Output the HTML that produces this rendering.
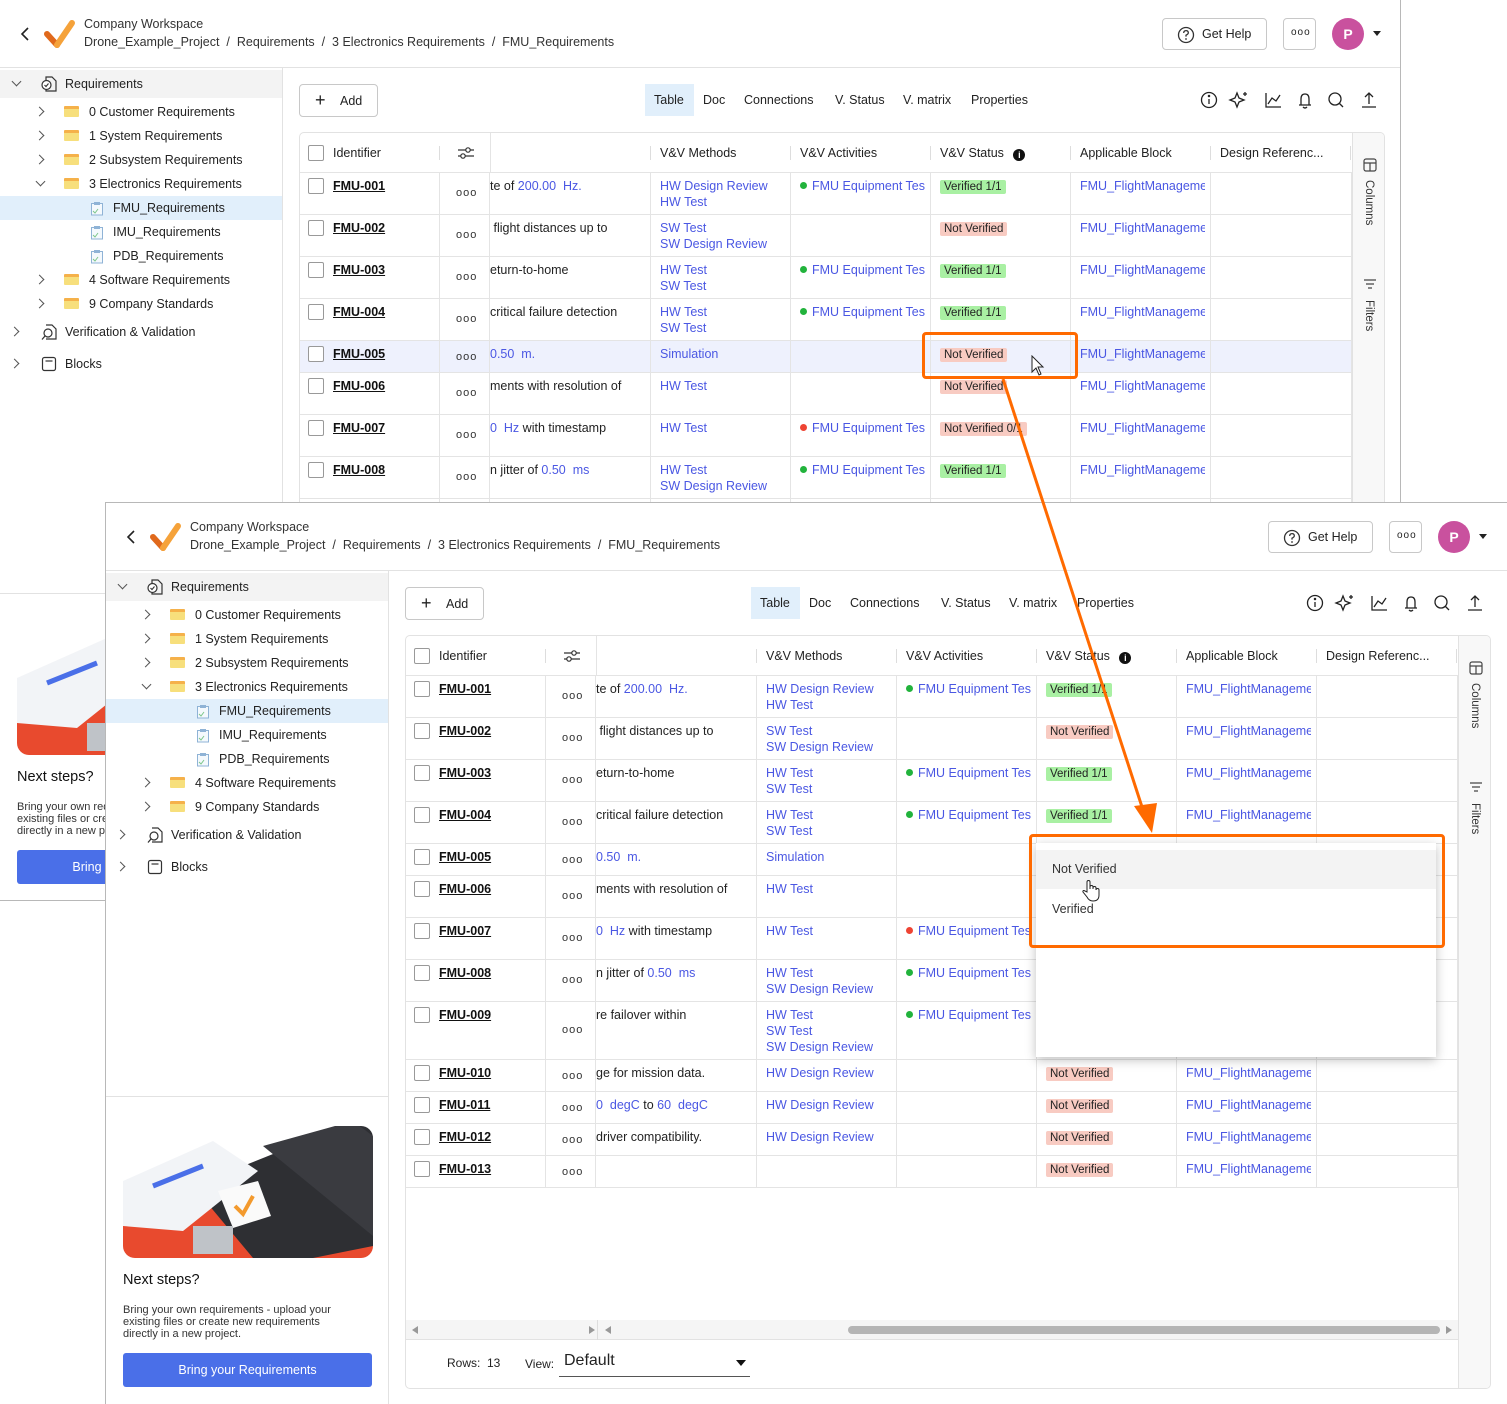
<!DOCTYPE html>
<html><head><meta charset="utf-8"><style>
*{box-sizing:border-box;margin:0;padding:0}
body{width:1507px;height:1404px;position:relative;overflow:hidden;background:#fff;font-family:"Liberation Sans",sans-serif;color:#222;font-size:12.5px}
.win{position:absolute;width:1402px;height:902px;background:#fff;border:1px solid #b8b8b8;overflow:hidden}
#w1{left:-1px;top:-1px;height:902px}
#w2{left:105px;top:502px;border-right:none;border-bottom:none}
.a{position:absolute;white-space:nowrap}
.hdr{position:absolute;left:0;top:0;width:1402px;height:68px;border-bottom:1px solid #e2e2e2}
.btn{position:absolute;border:1px solid #c8c8c8;border-radius:4px;background:#fff}
.side{position:absolute;left:0;top:68px;width:283px;height:840px;border-right:1px solid #e2e2e2}
.tr{position:absolute;left:0;width:282px;height:24px;line-height:24px;font-size:12.5px}
.fold{position:absolute;width:15px;height:11px;background:#f7df7c;border-top:3px solid #f5b14a;border-radius:1px}
.chev{position:absolute;width:7px;height:7px;border-right:1.5px solid #555;border-bottom:1.5px solid #555}
.cr{transform:rotate(-45deg)}.cd{transform:rotate(45deg)}
.tabl{position:absolute;left:299px;top:132px;width:1086px;height:754px;border:1px solid #e2e2e2;border-radius:5px;overflow:hidden}
.row{position:absolute;left:0;width:1052px;display:flex;border-bottom:1px solid #e4e4e4}
.row>div{position:relative;border-right:1px solid #e4e4e4;padding:5px 0 0 9px;line-height:16px;overflow:hidden;white-space:nowrap}
.t{overflow:hidden;width:125px;white-space:nowrap}
.c1{width:140px}.c2{width:50px}.c3{width:161px;padding-left:0!important}.c4,.c5,.c6,.c7{width:140px}.c8{width:141px}
.cb{position:absolute;left:8px;top:5px;width:16px;height:16px;border:1px solid #999;border-radius:2px;background:#fff}
.id{position:absolute;left:33px;top:5px;font-weight:bold;text-decoration:underline;color:#111}
.dots{position:absolute;left:16px;font-size:11px;letter-spacing:1px;color:#333}
.l{color:#4a57e3}
.vb{background:#a9f0a3;padding:0 4px;font-size:11.5px;border-radius:2px;display:inline-block;line-height:14px;margin-top:1px}
.nb{background:#f8cbc2;padding:0 4px;font-size:11.5px;border-radius:2px;display:inline-block;line-height:14px;margin-top:1px}
.gd,.rd{display:inline-block;width:7px;height:7px;border-radius:50%;background:#22b33c;margin-right:5px;vertical-align:1px}
.rd{background:#ee4433}
.hrow{position:absolute;left:0;top:0;width:1052px;height:40px;border-bottom:1px solid #e4e4e4;font-size:12.5px}
.hs{position:absolute;top:13px;width:1px;height:14px;background:#ddd}
.panel{position:absolute;left:1052px;top:0;width:34px;height:754px;background:#f8f8f8;border-left:1px solid #e2e2e2}
.vt{position:absolute;transform:rotate(90deg);transform-origin:0 0;font-size:11.5px;color:#333}
.ico{position:absolute}
</style></head><body>

<div class="win" id="w1">
<div id="tpl">
 <div class="hdr">
  <svg class="ico" style="left:18px;top:26px" width="14" height="16"><path d="M10 2 L4 8 L10 14" stroke="#222" stroke-width="1.6" fill="none"/></svg>
  <svg class="ico" style="left:43px;top:18px" width="34" height="32"><path d="M4 16 L14 27" stroke="#e0691c" stroke-width="6" stroke-linecap="round"/><path d="M14 27 L29 5" stroke="#f5a23a" stroke-width="6" stroke-linecap="round"/></svg>
  <div class="a" style="left:84px;top:17px;font-size:12.5px;color:#333">Company Workspace</div>
  <div class="a" style="left:84px;top:35px;font-size:12.5px;color:#333">Drone_Example_Project &nbsp;/&nbsp; Requirements &nbsp;/&nbsp; 3 Electronics Requirements &nbsp;/&nbsp; FMU_Requirements</div>
  <div class="btn" style="left:1162px;top:18px;width:105px;height:32px"><svg class="ico" style="left:14px;top:7px" width="18" height="18"><circle cx="9" cy="9" r="7.5" stroke="#333" stroke-width="1.3" fill="none"/><path d="M6.7 7 Q6.7 4.6 9 4.6 Q11.3 4.6 11.3 6.8 Q11.3 8.2 9 9.2 L9 10.6" stroke="#333" stroke-width="1.3" fill="none"/><circle cx="9" cy="13" r=".9" fill="#333"/></svg><span class="a" style="left:39px;top:8px;font-size:12.5px">Get Help</span></div>
  <div class="btn" style="left:1283px;top:18px;width:33px;height:32px"><span class="a" style="left:7px;top:8px;font-size:10px;letter-spacing:1px">ooo</span></div>
  <div class="a" style="left:1332px;top:18px;width:32px;height:32px;border-radius:50%;background:#c9519e;color:#fff;font-weight:bold;font-size:14px;text-align:center;line-height:32px">P</div>
  <div class="a" style="left:1373px;top:31px;width:0;height:0;border-left:4px solid transparent;border-right:4px solid transparent;border-top:5px solid #222"></div>
 </div>
 <div class="side">
  <div class="tr" style="top:2px;height:28px;background:#f3f3f3;line-height:28px"><i class="chev cd" style="left:13px;top:8px"></i>
   <svg class="ico" style="left:40px;top:5px" width="18" height="18"><path d="M6 2 H12 L16 6 V16 H6 Z" stroke="#333" fill="none" stroke-width="1.2"/><circle cx="6.5" cy="10" r="4.5" stroke="#333" fill="#fff" stroke-width="1.2"/><path d="M4.5 10 L6 11.5 L8.5 8.5" stroke="#333" fill="none" stroke-width="1.1"/></svg>
   <span class="a" style="left:65px">Requirements</span></div>
  <div class="tr" style="top:32px"><i class="chev cr" style="left:36px;top:8px"></i><i class="fold" style="left:64px;top:6px"></i><span class="a" style="left:89px">0 Customer Requirements</span></div>
  <div class="tr" style="top:56px"><i class="chev cr" style="left:36px;top:8px"></i><i class="fold" style="left:64px;top:6px"></i><span class="a" style="left:89px">1 System Requirements</span></div>
  <div class="tr" style="top:80px"><i class="chev cr" style="left:36px;top:8px"></i><i class="fold" style="left:64px;top:6px"></i><span class="a" style="left:89px">2 Subsystem Requirements</span></div>
  <div class="tr" style="top:104px"><i class="chev cd" style="left:37px;top:6px"></i><i class="fold" style="left:64px;top:6px"></i><span class="a" style="left:89px">3 Electronics Requirements</span></div>
  <div class="tr" style="top:128px;background:#e1effb"><svg class="ico" style="left:90px;top:5px" width="14" height="15"><rect x="1.5" y="2.5" width="11" height="11.5" stroke="#8fb3d6" fill="#f4f9fd"/><rect x="4" y="1" width="6" height="3" fill="#8fb3d6"/><path d="M3 10 L5 12 L8 8" stroke="#7cc68a" fill="none"/></svg><span class="a" style="left:113px">FMU_Requirements</span></div>
  <div class="tr" style="top:152px"><svg class="ico" style="left:90px;top:5px" width="14" height="15"><rect x="1.5" y="2.5" width="11" height="11.5" stroke="#8fb3d6" fill="#f4f9fd"/><rect x="4" y="1" width="6" height="3" fill="#8fb3d6"/><path d="M3 10 L5 12 L8 8" stroke="#7cc68a" fill="none"/></svg><span class="a" style="left:113px">IMU_Requirements</span></div>
  <div class="tr" style="top:176px"><svg class="ico" style="left:90px;top:5px" width="14" height="15"><rect x="1.5" y="2.5" width="11" height="11.5" stroke="#8fb3d6" fill="#f4f9fd"/><rect x="4" y="1" width="6" height="3" fill="#8fb3d6"/><path d="M3 10 L5 12 L8 8" stroke="#7cc68a" fill="none"/></svg><span class="a" style="left:113px">PDB_Requirements</span></div>
  <div class="tr" style="top:200px"><i class="chev cr" style="left:36px;top:8px"></i><i class="fold" style="left:64px;top:6px"></i><span class="a" style="left:89px">4 Software Requirements</span></div>
  <div class="tr" style="top:224px"><i class="chev cr" style="left:36px;top:8px"></i><i class="fold" style="left:64px;top:6px"></i><span class="a" style="left:89px">9 Company Standards</span></div>
  <div class="tr" style="top:252px"><i class="chev cr" style="left:11px;top:8px"></i><svg class="ico" style="left:40px;top:3px" width="18" height="18"><path d="M6 2 H12 L16 6 V16 H6" stroke="#333" fill="none" stroke-width="1.2"/><circle cx="8" cy="10" r="4" stroke="#333" fill="#fff" stroke-width="1.2"/><path d="M5 13 L2 16.5" stroke="#333" stroke-width="1.3"/></svg><span class="a" style="left:65px">Verification &amp; Validation</span></div>
  <div class="tr" style="top:284px"><i class="chev cr" style="left:11px;top:8px"></i><svg class="ico" style="left:41px;top:4px" width="16" height="16"><rect x="1.5" y="1.5" width="13" height="13" rx="2" stroke="#333" fill="none" stroke-width="1.2"/><path d="M4.5 5 H11.5" stroke="#333" stroke-width="1.2"/></svg><span class="a" style="left:65px">Blocks</span></div>
  <div class="a" style="left:0;top:525px;width:283px;height:1px;background:#e2e2e2"></div>
  <svg class="ico" style="left:17px;top:555px" width="250" height="132" viewBox="0 0 250 132">
   <defs><clipPath id="cp"><rect x="0" y="0" width="250" height="132" rx="12"/></clipPath></defs>
   <g clip-path="url(#cp)">
   <path d="M0 95 L150 40 L250 100 L250 132 L0 132 Z" fill="#e84a2e"/>
   <path d="M70 60 L220 0 L250 0 L250 120 L190 132 L130 132 Z" fill="#2e2f33"/>
   <path d="M140 20 L230 -5 L250 10 L250 110 Z" fill="#3a3b40"/>
   <path d="M0 55 L90 15 L135 45 L60 105 L0 100 Z" fill="#f2f4f7"/>
   <path d="M30 60 L80 40" stroke="#4a6fe8" stroke-width="5"/>
   <path d="M95 65 L135 55 L148 90 L110 102 Z" fill="#fafafa"/>
   <path d="M112 80 L120 88 L130 70" stroke="#f39a2e" stroke-width="4" fill="none"/>
   <rect x="70" y="100" width="40" height="28" fill="#bfc3c8"/>
   </g>
  </svg>
  <div class="a" style="left:17px;top:701px;font-size:14.5px;color:#111">Next steps?</div>
  <div class="a" style="left:17px;top:733px;font-size:11px;line-height:12px;color:#333;white-space:normal;width:232px">Bring your own requirements - upload your existing files or create new requirements directly in a new project.</div>
  <div class="a" style="left:17px;top:782px;width:249px;height:34px;background:#4a6fe8;border-radius:3px;color:#fff;text-align:center;line-height:34px;font-size:12.5px">Bring your Requirements</div>
 </div>
 <div class="btn" style="left:299px;top:84px;width:79px;height:33px"><span class="a" style="left:15px;top:6px;font-size:18px;font-weight:300;line-height:18px">+</span><span class="a" style="left:40px;top:9px">Add</span></div>
 <div class="a" style="left:645px;top:84px;width:49px;height:32px;background:#e1effb"></div>
 <div class="a" style="left:654px;top:93px">Table</div>
 <div class="a" style="left:703px;top:93px">Doc</div>
 <div class="a" style="left:744px;top:93px">Connections</div>
 <div class="a" style="left:835px;top:93px">V. Status</div>
 <div class="a" style="left:903px;top:93px">V. matrix</div>
 <div class="a" style="left:971px;top:93px">Properties</div>
 <svg class="ico" style="left:1199px;top:90px" width="180" height="20" fill="none" stroke="#222" stroke-width="1.3">
  <circle cx="10" cy="10" r="7.5"/><path d="M10 9 V14"/><circle cx="10" cy="6" r=".6" fill="#222"/>
  <path d="M38 3 L40 8 L45 10 L40 12 L38 17 L36 12 L31 10 L36 8 Z"/><path d="M46 2 V6 M44 4 H48"/>
  <path d="M67 3 V17 H82 M69 14 L73 8 L77 11 L81 5"/>
  <path d="M100 15 H112 M102 15 V9 Q102 4 106 4 Q110 4 110 9 V15 M104 17 Q106 19 108 17"/>
  <circle cx="136" cy="9" r="6"/><path d="M140.5 13.5 L144 17"/>
  <path d="M163 17 H177 M170 3 V14 M166 7 L170 3 L174 7"/>
 </svg>
 <div class="tabl">
  <div class="hrow">
   <div class="cb" style="top:12px;left:8px"></div>
   <span class="a" style="left:33px;top:13px">Identifier</span>
   <div class="hs" style="left:139px"></div>
   <svg class="ico" style="left:157px;top:12px" width="18" height="16" stroke="#333" fill="none" stroke-width="1.2"><path d="M1 5 H17 M1 11 H17"/><circle cx="11" cy="5" r="2.2" fill="#fff"/><circle cx="6" cy="11" r="2.2" fill="#fff"/></svg>
   <div class="a" style="left:190px;top:0;width:1px;height:40px;background:#e4e4e4"></div>
   <div class="hs" style="left:350px"></div><span class="a" style="left:360px;top:13px">V&amp;V Methods</span>
   <div class="hs" style="left:490px"></div><span class="a" style="left:500px;top:13px">V&amp;V Activities</span>
   <div class="hs" style="left:630px"></div><span class="a" style="left:640px;top:13px">V&amp;V Status <span style="display:inline-block;width:12px;height:12px;border-radius:50%;background:#111;color:#fff;font-size:9px;text-align:center;line-height:12px;font-weight:bold;margin-left:6px;vertical-align:-1px">i</span></span>
   <div class="hs" style="left:770px"></div><span class="a" style="left:780px;top:13px">Applicable Block</span>
   <div class="hs" style="left:910px"></div><span class="a" style="left:920px;top:13px">Design Referenc...</span>
   <div class="hs" style="left:1050px"></div>
  </div>
  <div class="row" style="top:40px;height:42px"><div class="c1"><i class="cb"></i><span class="id">FMU-001</span></div><div class="c2"><span class="dots" style="top:12px">ooo</span></div><div class="c3">te of <span class="l">200.00 &nbsp;Hz.</span></div><div class="c4 l">HW Design Review<br>HW Test</div><div class="c5 l"><div class="t"><i class="gd"></i>FMU Equipment Test</div></div><div class="c6"><span class="vb">Verified 1/1</span></div><div class="c7 l"><div class="t">FMU_FlightManagement</div></div><div class="c8"></div></div>
  <div class="row" style="top:82px;height:42px"><div class="c1"><i class="cb"></i><span class="id">FMU-002</span></div><div class="c2"><span class="dots" style="top:12px">ooo</span></div><div class="c3">&nbsp;flight distances up to</div><div class="c4 l">SW Test<br>SW Design Review</div><div class="c5"></div><div class="c6"><span class="nb">Not Verified</span></div><div class="c7 l"><div class="t">FMU_FlightManagement</div></div><div class="c8"></div></div>
  <div class="row" style="top:124px;height:42px"><div class="c1"><i class="cb"></i><span class="id">FMU-003</span></div><div class="c2"><span class="dots" style="top:12px">ooo</span></div><div class="c3">eturn-to-home</div><div class="c4 l">HW Test<br>SW Test</div><div class="c5 l"><div class="t"><i class="gd"></i>FMU Equipment Test</div></div><div class="c6"><span class="vb">Verified 1/1</span></div><div class="c7 l"><div class="t">FMU_FlightManagement</div></div><div class="c8"></div></div>
  <div class="row" style="top:166px;height:42px"><div class="c1"><i class="cb"></i><span class="id">FMU-004</span></div><div class="c2"><span class="dots" style="top:12px">ooo</span></div><div class="c3">critical failure detection</div><div class="c4 l">HW Test<br>SW Test</div><div class="c5 l"><div class="t"><i class="gd"></i>FMU Equipment Test</div></div><div class="c6"><span class="vb">Verified 1/1</span></div><div class="c7 l"><div class="t">FMU_FlightManagement</div></div><div class="c8"></div></div>
  <div class="row r5" style="top:208px;height:32px"><div class="c1"><i class="cb"></i><span class="id">FMU-005</span></div><div class="c2"><span class="dots" style="top:8px">ooo</span></div><div class="c3 l">0.50 &nbsp;m.</div><div class="c4 l">Simulation</div><div class="c5"></div><div class="c6"><span class="nb s5">Not Verified</span></div><div class="c7 l"><div class="t">FMU_FlightManagement</div></div><div class="c8"></div></div>
  <div class="row" style="top:240px;height:42px"><div class="c1"><i class="cb"></i><span class="id">FMU-006</span></div><div class="c2"><span class="dots" style="top:12px">ooo</span></div><div class="c3">ments with resolution of</div><div class="c4 l">HW Test</div><div class="c5"></div><div class="c6"><span class="nb">Not Verified</span></div><div class="c7 l"><div class="t">FMU_FlightManagement</div></div><div class="c8"></div></div>
  <div class="row" style="top:282px;height:42px"><div class="c1"><i class="cb"></i><span class="id">FMU-007</span></div><div class="c2"><span class="dots" style="top:12px">ooo</span></div><div class="c3"><span class="l">0 &nbsp;Hz</span> with timestamp</div><div class="c4 l">HW Test</div><div class="c5 l"><div class="t"><i class="rd"></i>FMU Equipment Test</div></div><div class="c6"><span class="nb">Not Verified 0/1</span></div><div class="c7 l"><div class="t">FMU_FlightManagement</div></div><div class="c8"></div></div>
  <div class="row" style="top:324px;height:42px"><div class="c1"><i class="cb"></i><span class="id">FMU-008</span></div><div class="c2"><span class="dots" style="top:12px">ooo</span></div><div class="c3">n jitter of <span class="l">0.50 &nbsp;ms</span></div><div class="c4 l">HW Test<br>SW Design Review</div><div class="c5 l"><div class="t"><i class="gd"></i>FMU Equipment Test</div></div><div class="c6"><span class="vb">Verified 1/1</span></div><div class="c7 l"><div class="t">FMU_FlightManagement</div></div><div class="c8"></div></div>
  <div class="row" style="top:366px;height:58px"><div class="c1"><i class="cb"></i><span class="id">FMU-009</span></div><div class="c2"><span class="dots" style="top:20px">ooo</span></div><div class="c3">re failover within</div><div class="c4 l">HW Test<br>SW Test<br>SW Design Review</div><div class="c5 l"><div class="t"><i class="gd"></i>FMU Equipment Test</div></div><div class="c6"><span class="vb">Verified 1/1</span></div><div class="c7 l"><div class="t">FMU_FlightManagement</div></div><div class="c8"></div></div>
  <div class="row" style="top:424px;height:32px"><div class="c1"><i class="cb"></i><span class="id">FMU-010</span></div><div class="c2"><span class="dots" style="top:8px">ooo</span></div><div class="c3">ge for mission data.</div><div class="c4 l">HW Design Review</div><div class="c5"></div><div class="c6"><span class="nb">Not Verified</span></div><div class="c7 l"><div class="t">FMU_FlightManagement</div></div><div class="c8"></div></div>
  <div class="row" style="top:456px;height:32px"><div class="c1"><i class="cb"></i><span class="id">FMU-011</span></div><div class="c2"><span class="dots" style="top:8px">ooo</span></div><div class="c3"><span class="l">0 &nbsp;degC</span> to <span class="l">60 &nbsp;degC</span></div><div class="c4 l">HW Design Review</div><div class="c5"></div><div class="c6"><span class="nb">Not Verified</span></div><div class="c7 l"><div class="t">FMU_FlightManagement</div></div><div class="c8"></div></div>
  <div class="row" style="top:488px;height:32px"><div class="c1"><i class="cb"></i><span class="id">FMU-012</span></div><div class="c2"><span class="dots" style="top:8px">ooo</span></div><div class="c3">driver compatibility.</div><div class="c4 l">HW Design Review</div><div class="c5"></div><div class="c6"><span class="nb">Not Verified</span></div><div class="c7 l"><div class="t">FMU_FlightManagement</div></div><div class="c8"></div></div>
  <div class="row" style="top:520px;height:32px"><div class="c1"><i class="cb"></i><span class="id">FMU-013</span></div><div class="c2"><span class="dots" style="top:8px">ooo</span></div><div class="c3"></div><div class="c4"></div><div class="c5"></div><div class="c6"><span class="nb">Not Verified</span></div><div class="c7 l"><div class="t">FMU_FlightManagement</div></div><div class="c8"></div></div>
  <div class="a" style="left:0;top:684px;width:1052px;height:20px;background:#f5f5f5;border-bottom:1px solid #e2e2e2"></div>
  <div class="a" style="left:6px;top:690px;border-right:6px solid #999;border-top:4px solid transparent;border-bottom:4px solid transparent"></div>
  <div class="a" style="left:183px;top:690px;border-left:6px solid #999;border-top:4px solid transparent;border-bottom:4px solid transparent"></div>
  <div class="a" style="left:191px;top:684px;width:1px;height:20px;background:#ddd"></div>
  <div class="a" style="left:199px;top:690px;border-right:6px solid #999;border-top:4px solid transparent;border-bottom:4px solid transparent"></div>
  <div class="a" style="left:442px;top:690px;width:592px;height:8px;border-radius:4px;background:#b5b5b5"></div>
  <div class="a" style="left:1040px;top:690px;border-left:6px solid #999;border-top:4px solid transparent;border-bottom:4px solid transparent"></div>
  <span class="a" style="left:41px;top:720px;font-size:12px">Rows: &nbsp;13</span>
  <span class="a" style="left:119px;top:721px;font-size:12px">View:</span>
  <span class="a" style="left:158px;top:716px;font-size:16px">Default</span>
  <div class="a" style="left:153px;top:740px;width:191px;height:1px;background:#555"></div>
  <div class="a" style="left:330px;top:724px;border-left:5px solid transparent;border-right:5px solid transparent;border-top:6px solid #111"></div>
  <div class="panel">
   <svg class="ico" style="left:10px;top:25px" width="14" height="14" stroke="#444" fill="none" stroke-width="1.2"><rect x="1" y="1" width="12" height="12" rx="2"/><path d="M1 5 H13 M7 5 V13"/></svg>
   <span class="vt" style="left:22px;top:47px">Columns</span>
   <svg class="ico" style="left:10px;top:145px" width="14" height="12" stroke="#444" stroke-width="1.2"><path d="M1 2 H13 M3 6 H11 M5 10 H9"/></svg>
   <span class="vt" style="left:22px;top:167px">Filters</span>
  </div>
 </div>
</div>
</div>

<div class="win" id="w2"></div>

<div class="a" style="left:922px;top:332px;width:156px;height:47px;border:3px solid #ff6a00;border-radius:4px"></div>
<svg class="ico" style="left:1030px;top:355px" width="16" height="22"><path d="M2 1 L2 17 L6 13 L9 20 L11 19 L8 12 L13 12 Z" fill="#fff" stroke="#222" stroke-width="1"/></svg>

<div class="a" style="left:1036px;top:843px;width:400px;height:214px;background:#fff;box-shadow:0 3px 10px rgba(0,0,0,.25)"></div>
<div class="a" style="left:1036px;top:850px;width:400px;height:39px;background:#f3f3f3"></div>
<div class="a" style="left:1052px;top:862px;font-size:12.5px;color:#333">Not Verified</div>
<div class="a" style="left:1052px;top:902px;font-size:12.5px;color:#333">Verified</div>
<svg class="ico" style="left:1081px;top:879px" width="20" height="24"><path d="M6 13 V3 Q6 1.5 7.5 1.5 Q9 1.5 9 3 V10 V8 Q9 6.5 10.5 6.5 Q12 6.5 12 8 V10 V9 Q12 7.5 13.5 7.5 Q15 7.5 15 9 V11 Q15 9.5 16.5 9.5 Q18 9.5 18 11 V16 Q18 22 12 22 Q8 22 6 18 L2 13 Q1.5 11.5 3 11.5 Z" fill="#fff" stroke="#222" stroke-width="1"/></svg>
<div class="a" style="left:1029px;top:834px;width:416px;height:114px;border:3px solid #ff6a00;border-radius:4px"></div>

<svg class="ico" style="left:0;top:0" width="1507" height="1404"><path d="M1003 379 L1143 810" stroke="#ff6a00" stroke-width="3"/><path d="M1134 806 L1157 803 L1152 833 Z" fill="#ff6a00"/></svg>

<style>#w1 .r5{background:#eef1fd}#w1 .r5>div{background:transparent}#w2 .s5{visibility:hidden}</style>
<script>document.getElementById('w2').innerHTML=document.getElementById('tpl').innerHTML;</script>
</body></html>
